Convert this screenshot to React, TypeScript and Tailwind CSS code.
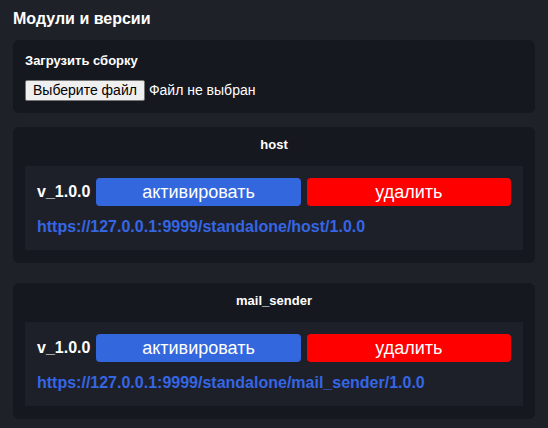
const modules = [
  { name: 'host', version: '1.0.0' },
  { name: 'mail_sender', version: '1.0.0' },
]

function ModuleCard({ name, version }: { name: string; version: string }) {
  const url = `https://127.0.0.1:9999/standalone/${name}/${version}`
  return (
    <div className="mt-[20px] first:mt-0 rounded-md bg-[#16181f] px-3 pt-[4px] pb-[13px]">
      <div className="mb-[7px] text-center text-[13px] font-bold leading-[28px] text-white">{name}</div>
      <div className="bg-[#1e2029] p-3 pb-[14px]">
        <div className="flex items-center gap-[6px]">
          <span className="text-[16px] font-bold text-white">v_{version}</span>
          <button className="h-[28px] flex-1 rounded-[4px] bg-[#3367dd] text-[18px] text-white">
            активировать
          </button>
          <button className="h-[28px] flex-1 rounded-[4px] bg-[#ff0000] text-[18px] text-white">
            удалить
          </button>
        </div>
        <a href={url} className="mt-[12px] block text-[16px] font-bold leading-[18px] text-[#3566e4]">
          {url}
        </a>
      </div>
    </div>
  )
}

export default function App() {
  return (
    <div className="min-h-[428px] bg-[#1f2129] px-[13px] pt-[8px] pb-3 font-['Liberation_Sans',Arial,sans-serif]">
      <h1 className="text-[16px] font-bold leading-[22px] text-white">Модули и версии</h1>

      {/* Upload */}
      <div className="mt-[10px] rounded-md bg-[#16181f] px-3 pt-[13px] pb-[12px]">
        <div className="text-[13px] font-bold leading-[16px] text-white">Загрузить сборку</div>
        <div className="mt-[11px] flex items-center gap-[4px]">
          <span className="rounded-[2px] border border-[#767676] bg-[#efefef] px-[7px] text-[14px] leading-[19px] text-black">
            Выберите файл
          </span>
          <span className="text-[14px] text-white">Файл не выбран</span>
        </div>
      </div>

      <div className="mt-[14px]">
        {modules.map((m) => (
          <ModuleCard key={m.name} name={m.name} version={m.version} />
        ))}
      </div>
    </div>
  )
}
